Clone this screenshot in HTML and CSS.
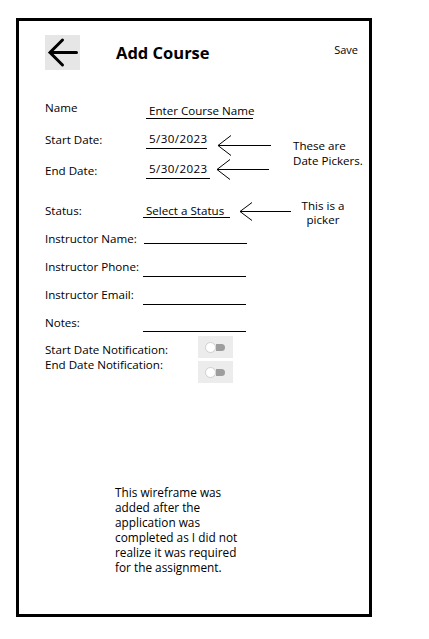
FILE: index.html
```
<!DOCTYPE html>
<html lang="en">
<head>
<meta charset="utf-8">
<title>Add Course</title>
<link rel="stylesheet" href="styles.css">
</head>
<body>
<div class="frame">
  <header class="header">
    <div class="back">
      <svg class="back-icon" width="35" height="35" viewBox="0 0 35 35">
        <path d="M17.5 5 L5 17.5 L17.5 30 M5 17.5 H31.5" fill="none" stroke="#000" stroke-width="3" stroke-linecap="round" stroke-linejoin="miter"/>
      </svg>
    </div>
    <h1 class="title">Add Course</h1>
    <div class="save">Save</div>
  </header>

  <div class="form">
    <div class="row row-name">
      <div class="label">Name</div>
      <div class="field field-name">Enter Course Name</div>
    </div>

    <div class="dates">
      <div class="label">Start Date:</div>
      <div class="field field-date field-start">5/30/2023</div>
      <svg class="arrow arrow-start" width="54" height="22" viewBox="0 0 54 22">
        <path d="M14 1.5 L1 11.5 L14 21.5" fill="none" stroke="#000" stroke-width="1"/>
        <path d="M1 11.5 H54" fill="none" stroke="#000" stroke-width="1" shape-rendering="crispEdges"/>
      </svg>
      <div class="note note-dates">These are<br>Date Pickers.</div>
      <div class="label">End Date:</div>
      <div class="field field-date field-end">5/30/2023</div>
      <svg class="arrow arrow-end" width="54" height="22" viewBox="0 0 54 22">
        <path d="M14 1.5 L1 11.5 L14 21.5" fill="none" stroke="#000" stroke-width="1"/>
        <path d="M1 11.5 H53" fill="none" stroke="#000" stroke-width="1" shape-rendering="crispEdges"/>
      </svg>
    </div>

    <div class="row row-status">
      <div class="label label-narrow">Status:</div>
      <div class="field field-status">Select a Status</div>
      <svg class="arrow arrow-status" width="52" height="22" viewBox="0 0 52 22">
        <path d="M13 2.5 L1 11.5 L13 20.5" fill="none" stroke="#000" stroke-width="1"/>
        <path d="M1 11.5 H52" fill="none" stroke="#000" stroke-width="1" shape-rendering="crispEdges"/>
      </svg>
      <div class="note note-picker">This is a<br>picker</div>
    </div>

    <div class="row row-instr-name">
      <div class="label label-narrow">Instructor Name:</div>
      <div class="line line-instr-name"></div>
    </div>
    <div class="row row-phone">
      <div class="label label-narrow">Instructor Phone:</div>
      <div class="line line-phone"></div>
    </div>
    <div class="row row-email">
      <div class="label label-narrow">Instructor Email:</div>
      <div class="line line-email"></div>
    </div>
    <div class="row row-notes">
      <div class="label label-narrow">Notes:</div>
      <div class="line line-notes"></div>
    </div>

    <div class="notify">
      <div class="notify-labels">
        <div class="notify-label">Start Date Notification:</div>
        <div class="notify-label">End Date Notification:</div>
      </div>
      <div class="notify-switches">
        <div class="switch"><span class="knob"></span><span class="track"></span></div>
        <div class="switch"><span class="knob"></span><span class="track"></span></div>
      </div>
    </div>
  </div>

  <p class="remark">This wireframe was added after the application was completed as I did not realize it was required for the assignment.</p>
</div>
</body>
</html>
```

FILE: styles.css
```
* {
  box-sizing: border-box;
}

html, body {
  margin: 0;
  padding: 0;
  background: #fff;
}

body {
  font-family: "Open Sans", "Noto Sans", "Liberation Sans", sans-serif;
  font-size: 11.6px;
  line-height: 15px;
  color: #000;
}

.frame {
  margin: 18px 0 0 16px;
  width: 356px;
  height: 599px;
  border: 3px solid #000;
}

/* header */
.header {
  display: flex;
  align-items: flex-start;
  padding: 14px 0 0 26px;
}

.back {
  width: 35px;
  height: 35px;
  background: #e6e6e6;
  display: flex;
}

.title {
  margin: 8px 0 0 36px;
  font-size: 16.5px;
  line-height: 20px;
  font-weight: 700;
}

.save {
  margin: 8px 11px 0 auto;
  font-size: 11px;
  line-height: 14px;
}

/* form */
.form {
  margin-top: 30px;
  padding-left: 26px;
}

.row {
  display: flex;
  align-items: flex-start;
}

.label {
  width: 101px;
  flex: none;
  white-space: nowrap;
}

.label-narrow {
  width: 98px;
}

.field {
  line-height: 14px;
  border-bottom: 1px solid #000;
  padding-left: 3px;
  white-space: nowrap;
}

.row-name {
  height: 32px;
}

.field-name {
  margin-top: 4px;
  width: 107px;
}

.dates {
  display: grid;
  grid-template-columns: 101px 71px 54px auto;
  grid-template-rows: 31px 40px;
  align-items: start;
}

.field-date {
  letter-spacing: 0.4px;
  padding-bottom: 2px;
}

.field-start {
  width: 61px;
}

.field-end {
  width: 64px;
  margin-top: -1px;
}

.arrow {
  display: block;
  flex: none;
}

.arrow-start {
  margin-top: 2px;
}

.arrow-end {
  margin-top: -5px;
  margin-left: -1px;
}

.note-dates {
  grid-column: 4;
  grid-row: 1 / span 2;
  margin: 6px 0 0 22px;
  white-space: nowrap;
}

.row-status {
  height: 28px;
}

.field-status {
  width: 87px;
  line-height: 12px;
  margin-top: 2px;
}

.arrow-status {
  margin: -3px 0 0 9px;
}

.note-picker {
  width: 46px;
  margin: -4px 0 0 9px;
  line-height: 13.5px;
  text-align: center;
  white-space: nowrap;
}

.line {
  width: 103px;
  border-bottom: 1px solid #000;
}

.row-instr-name,
.row-phone,
.row-email {
  height: 28px;
}

.row-notes {
  height: 21px;
}

.line-instr-name {
  height: 13px;
  margin-left: 1px;
}

.line-phone,
.line-email {
  height: 18px;
}

.line-notes {
  height: 17px;
}

/* notifications */
.notify {
  display: grid;
  grid-template-columns: 153px 35px;
  align-items: start;
}

.notify-labels {
  margin-top: 7px;
  font-size: 11.6px;
  line-height: 14.5px;
  white-space: nowrap;
}

.notify-switches {
  display: flex;
  flex-direction: column;
  gap: 3px;
}

.switch {
  width: 35px;
  height: 22px;
  background: #ececec;
  display: flex;
  align-items: center;
  padding-left: 7px;
}

.knob {
  width: 11px;
  height: 11px;
  border-radius: 50%;
  background: #fff;
  border: 1px solid #cfcfcf;
  flex: none;
}

.track {
  width: 9px;
  height: 7px;
  background: #9d9d9d;
  border-radius: 0 4px 4px 0;
  flex: none;
}

/* remark */
.remark {
  margin: 102px 0 0 96px;
  width: 134px;
  font-size: 11.8px;
  line-height: 15px;
}
```
